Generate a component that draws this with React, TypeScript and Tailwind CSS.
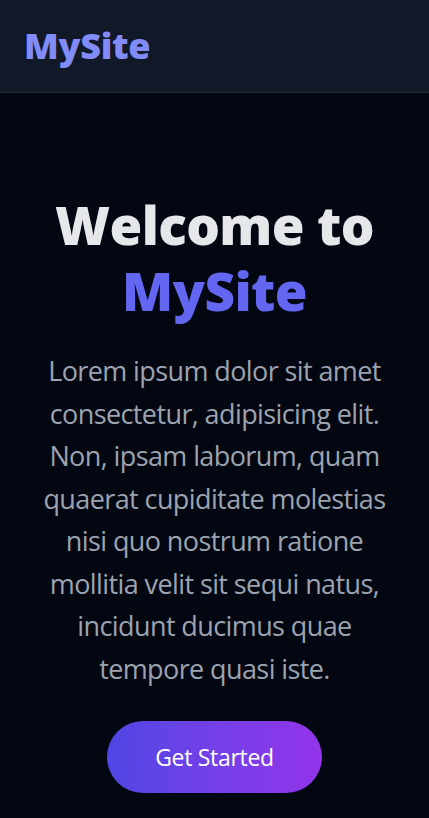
import React from "react";

export default function App() {
  const font = { fontFamily: '"Open Sans", "Noto Sans", sans-serif' };
  return (
    <div className="min-h-[818px] bg-[#030712]" style={font}>
      <header className="h-[93px] bg-[#111827] border-b border-[#1f2937] flex items-center px-6">
        <span className="text-[36px] leading-none font-extrabold text-[#818cf8] tracking-[-0.3px]">MySite</span>
      </header>
      <main className="flex flex-col items-center text-center px-[38px] pt-[99px]">
        <h1 className="text-[53px] leading-[66px] font-extrabold text-[#e5e7eb] tracking-[-0.6px]">
          Welcome to <span className="text-[#6366f1]">MySite</span>
        </h1>
        <p className="mt-[26px] text-[27px] leading-[42.5px] text-[#9ca3af] tracking-[-0.6px]">
          Lorem ipsum dolor sit amet consectetur, adipisicing elit. Non, ipsam laborum, quam quaerat cupiditate molestias nisi quo nostrum ratione mollitia velit sit sequi natus, incidunt ducimus quae tempore quasi iste.
        </p>
        <button className="mt-[31px] w-[215px] h-[72px] rounded-full bg-linear-to-r from-[#4f46e5] to-[#9333ea] text-white text-[23px] tracking-[-0.3px]">
          Get Started
        </button>
      </main>
    </div>
  );
}
